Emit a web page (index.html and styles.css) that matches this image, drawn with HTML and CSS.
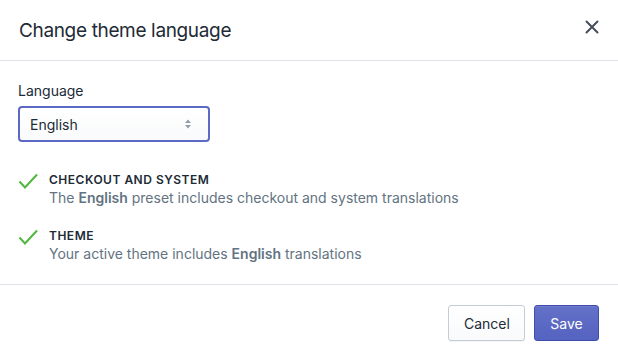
FILE: index.html
```html
<!DOCTYPE html>
<html lang="en">
<head>
<meta charset="utf-8">
<title>Change theme language</title>
<link rel="stylesheet" href="styles.css">
</head>
<body>
<div class="modal">
  <header class="modal-header">
    <h2 class="modal-title">Change theme language</h2>
    <button class="close-btn" aria-label="Close">
      <svg width="20" height="20" viewBox="0 0 20 20"><path d="M4.5 4.5l11 11M15.5 4.5l-11 11" stroke="#454f5b" stroke-width="2" stroke-linecap="round"/></svg>
    </button>
  </header>
  <section class="modal-body">
    <label class="field-label" for="lang">Language</label>
    <div class="select">
      <span class="select-value">English</span>
      <svg class="select-arrows" width="10" height="12" viewBox="0 0 10 12"><path d="M5 1.5l3 3.5H2z M5 10.5l3-3.5H2z" fill="#919eab"/></svg>
    </div>
    <ul class="checklist">
      <li class="check-item">
        <svg class="check-icon" width="20" height="16" viewBox="0 0 20 16"><path d="M1.5 8.5l5.5 6L19 1.5" fill="none" stroke="#50b83c" stroke-width="2"/></svg>
        <div class="check-text">
          <h3 class="check-heading">Checkout and system</h3>
          <p class="check-desc">The <strong>English</strong> preset includes checkout and system translations</p>
        </div>
      </li>
      <li class="check-item">
        <svg class="check-icon" width="20" height="16" viewBox="0 0 20 16"><path d="M1.5 8.5l5.5 6L19 1.5" fill="none" stroke="#50b83c" stroke-width="2"/></svg>
        <div class="check-text">
          <h3 class="check-heading">Theme</h3>
          <p class="check-desc">Your active theme includes <strong>English</strong> translations</p>
        </div>
      </li>
    </ul>
  </section>
  <footer class="modal-footer">
    <button class="btn btn-secondary">Cancel</button>
    <button class="btn btn-primary">Save</button>
  </footer>
</div>
</body>
</html>
```

FILE: styles.css
```css
* { box-sizing: border-box; }
html, body {
  margin: 0;
  padding: 0;
  background: #fff;
}
body {
  font-family: Inter, "Noto Sans", sans-serif;
  color: #212b36;
  -webkit-font-smoothing: antialiased;
}
.modal {
  width: 618px;
  height: 361px;
  display: flex;
  flex-direction: column;
}
.modal-header {
  height: 61px;
  border-bottom: 1px solid #dfe3e8;
  display: flex;
  align-items: center;
  justify-content: space-between;
  padding: 0 16px 0 19px;
}
.modal-title {
  margin: 0;
  font-size: 19px;
  font-weight: 400;
  color: #212b36;
  letter-spacing: -0.35px;
}
.close-btn {
  border: 0;
  background: none;
  padding: 0;
  width: 20px;
  height: 20px;
  margin-top: -6px;
  display: flex;
}
.modal-body {
  padding: 20px 18px 20px;
  border-bottom: 1px solid #dfe3e8;
}
.field-label {
  display: block;
  font-size: 14px;
  line-height: 20px;
  margin-bottom: 5px;
  color: #212b36;
}
.select {
  width: 192px;
  height: 36px;
  border: 2px solid #5c6ac4;
  border-radius: 4px;
  background: linear-gradient(#fff, #f9fafb);
  display: flex;
  align-items: center;
  justify-content: space-between;
  padding: 0 15px 0 10px;
  font-size: 14px;
}
.select-value { color: #212b36; }
.checklist {
  list-style: none;
  margin: 30px 0 0;
  padding: 0;
  display: flex;
  flex-direction: column;
  gap: 20px;
}
.check-item {
  display: flex;
  gap: 11px;
  align-items: flex-start;
}
.check-icon {
  margin-top: 1px;
  flex: none;
}
.check-heading {
  margin: 0;
  font-size: 12px;
  line-height: 16px;
  font-weight: 600;
  letter-spacing: 0.5px;
  text-transform: uppercase;
  color: #212b36;
}
.check-desc {
  margin: 0;
  font-size: 14px;
  line-height: 20px;
  color: #637381;
}
.check-desc strong {
  font-weight: 600;
  color: #637381;
}
.modal-footer {
  flex: 1;
  display: flex;
  justify-content: flex-end;
  align-items: flex-start;
  gap: 9px;
  padding: 20px 19px 0;
}
.btn {
  height: 36px;
  border-radius: 3px;
  font-family: inherit;
  font-size: 14px;
  padding: 0 15px;
}
.btn-secondary {
  width: 77px;
  background: linear-gradient(#fff, #f9fafb);
  border: 1px solid #c4cdd5;
  color: #212b36;
  box-shadow: 0 1px 0 rgba(22,29,37,0.05);
}
.btn-primary {
  width: 65px;
  background: linear-gradient(#6371c7, #5563c1);
  border: 1px solid #3f4eae;
  color: #fff;
  box-shadow: inset 0 1px 0 #6f7bcb;
}
```
